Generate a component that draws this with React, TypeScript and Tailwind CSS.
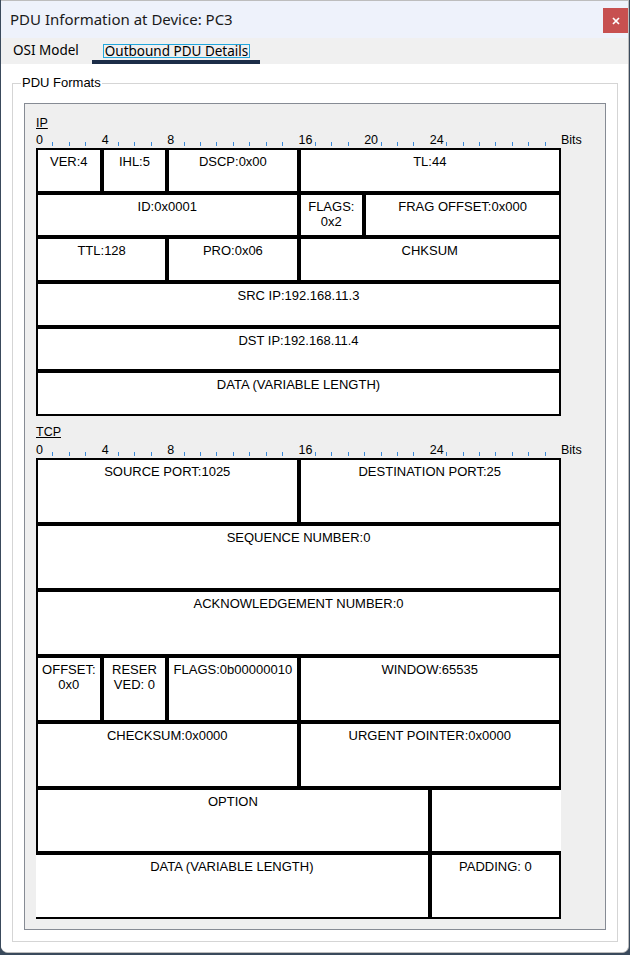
import React from "react";

type Cell = { text: string[]; span: string; noL?: boolean; noR?: boolean };

const ipRows: Cell[] = [
  { text: ["VER:4"], span: "col-span-4" },
  { text: ["IHL:5"], span: "col-span-4" },
  { text: ["DSCP:0x00"], span: "col-span-8" },
  { text: ["TL:44"], span: "col-span-16" },
  { text: ["ID:0x0001"], span: "col-span-16" },
  { text: ["FLAGS:", "0x2"], span: "col-span-4" },
  { text: ["FRAG OFFSET:0x000"], span: "col-span-12" },
  { text: ["TTL:128"], span: "col-span-8" },
  { text: ["PRO:0x06"], span: "col-span-8" },
  { text: ["CHKSUM"], span: "col-span-16" },
  { text: ["SRC IP:192.168.11.3"], span: "col-span-32" },
  { text: ["DST IP:192.168.11.4"], span: "col-span-32" },
  { text: ["DATA (VARIABLE LENGTH)"], span: "col-span-32" },
];

const tcpRows: Cell[] = [
  { text: ["SOURCE PORT:1025"], span: "col-span-16" },
  { text: ["DESTINATION PORT:25"], span: "col-span-16" },
  { text: ["SEQUENCE NUMBER:0"], span: "col-span-32" },
  { text: ["ACKNOWLEDGEMENT NUMBER:0"], span: "col-span-32" },
  { text: ["OFFSET:", "0x0"], span: "col-span-4" },
  { text: ["RESER", "VED: 0"], span: "col-span-4" },
  { text: ["FLAGS:0b00000010"], span: "col-span-8" },
  { text: ["WINDOW:65535"], span: "col-span-16" },
  { text: ["CHECKSUM:0x0000"], span: "col-span-16" },
  { text: ["URGENT POINTER:0x0000"], span: "col-span-16" },
  { text: ["OPTION"], span: "col-span-24" },
  { text: [], span: "col-span-8", noR: true },
  { text: ["DATA (VARIABLE LENGTH)"], span: "col-span-24", noL: true },
  { text: ["PADDING: 0"], span: "col-span-8" },
];

const arial = "font-['Liberation_Sans',Arial,sans-serif]";

function Ruler({ labels }: { labels: Record<number, string> }) {
  const bits = Array.from({ length: 32 }, (_, i) => i);
  return (
    <div className="flex h-[15px] text-[12.5px] leading-[14px]">
      <div className="grid w-[525px] grid-cols-[repeat(32,minmax(0,1fr))]">
        {bits.map((b) =>
          labels[b] ? (
            <div key={b} className="whitespace-nowrap">{labels[b]}</div>
          ) : (
            <div key={b} className="flex items-end pb-[2px]">
              <div className="h-[4px] w-px bg-[#3d8ad8]" />
            </div>
          )
        )}
      </div>
      <span>Bits</span>
    </div>
  );
}

function Table({ cells, rowH }: { cells: Cell[]; rowH: string }) {
  return (
    <div className={`grid w-[525px] grid-cols-[repeat(32,minmax(0,1fr))] ${rowH}`}>
      {cells.map((c, i) => (
        <div
          key={i}
          className={`${c.span} border-2 border-black bg-white pt-[4px] text-center text-[13px] leading-[15.5px] ${c.noL ? "border-l-0" : ""} ${c.noR ? "border-r-0" : ""}`}
        >
          {c.text.map((t, j) => (
            <div key={j} className="whitespace-nowrap">{t}</div>
          ))}
        </div>
      ))}
    </div>
  );
}

export default function App() {
  return (
    <div className="h-[955px] w-[630px] overflow-hidden bg-[#3a4a5c]">
      <div className="ml-px flex h-[953px] w-[628px] flex-col overflow-hidden rounded-b-[7px] border-r border-b border-t border-[#bdbdbd] bg-white">
        {/* title bar */}
        <div className="flex h-[37px] shrink-0 items-center justify-between bg-[#eef2fb] pl-[9px]">
          <span className="font-['Noto_Sans',sans-serif] text-[15px] text-[#1a1a1a]">
            PDU Information at Device: PC3
          </span>
          <div className="mt-[7px] flex h-[25px] w-[25px] items-center justify-center self-start bg-[#c75050]">
            <svg width="8" height="8" viewBox="0 0 8 8">
              <path d="M1 1L7 7M7 1L1 7" stroke="white" strokeWidth="1.7" />
            </svg>
          </div>
        </div>

        {/* tabs */}
        <div className="flex h-[26px] shrink-0 items-start bg-[#f0f0f0] font-['Noto_Sans',sans-serif] text-[13.5px] text-black">
          <div className="w-[91px] whitespace-nowrap pl-[12px] pt-[3px] leading-[18px]">OSI Model</div>
          <div className="flex h-[26px] w-[168px] flex-col justify-between">
            <div className="ml-[11px] mt-[6px] w-[147px] whitespace-nowrap border border-[#22a7dc] text-center leading-[12px]">
              Outbound PDU Details
            </div>
            <div className="h-[4px] w-full bg-[#1c2d48]" />
          </div>
        </div>

        {/* content */}
        <div className={`flex-1 bg-white pt-[19px] ${arial} text-[12.5px] text-black`}>
          <div className="relative ml-[11px] w-[606px] border border-[#d5d5d5] px-[11px] pb-[11px] pt-[19px]">
            <span className="absolute left-[8px] top-[-8px] bg-white px-px text-[13px] leading-[14px]">PDU Formats</span>
            <div className="h-[827px] border border-[#868b94] bg-[#efefef] pl-[11px] pt-[12px]">
              <div className="h-[17px] leading-[14px]">
                <span className="underline">IP</span>
              </div>
              <Ruler labels={{ 0: "0", 4: "4", 8: "8", 16: "16", 20: "20", 24: "24" }} />
              <Table cells={ipRows} rowH="auto-rows-[44.7px]" />

              <div className="mt-[9px] h-[18px] leading-[14px]">
                <span className="underline">TCP</span>
              </div>
              <Ruler labels={{ 0: "0", 4: "4", 8: "8", 16: "16", 24: "24" }} />
              <Table cells={tcpRows} rowH="auto-rows-[65.9px]" />
            </div>
          </div>
        </div>
      </div>
    </div>
  );
}
